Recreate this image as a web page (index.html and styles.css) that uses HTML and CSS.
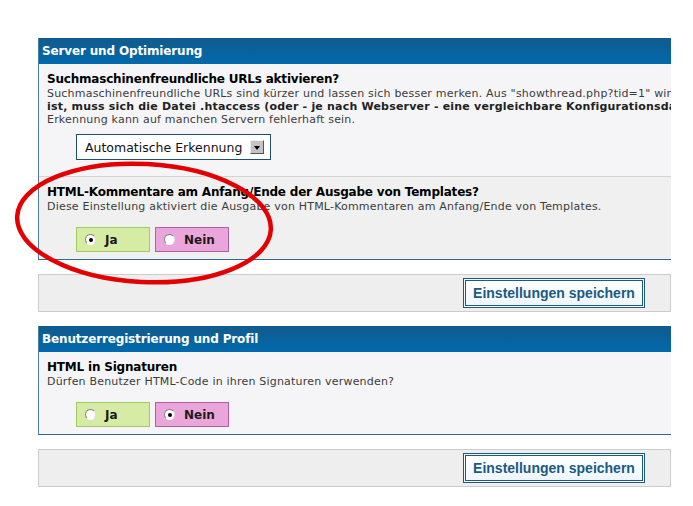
FILE: index.html
```html
<!DOCTYPE html>
<html lang="de">
<head>
    <meta charset="UTF-8">
    <title>Einstellungen</title>
    <link rel="stylesheet" href="styles.css">
</head>
<body>
    <div class="page">

        <!-- Server und Optimierung -->
        <div class="panel">
            <div class="panel-head">Server und Optimierung</div>

            <div class="row alt1 first-row">
                <div class="row-title">Suchmaschinenfreundliche URLs aktivieren?</div>
                <div class="row-desc">
                    Suchmaschinenfreundliche URLs sind kürzer und lassen sich besser merken. Aus "showthread.php?tid=1" wird "thread-1.html". Damit dies funktioniert<br>
                    <b>ist, muss sich die Datei .htaccess (oder - je nach Webserver - eine vergleichbare Konfigurationsdatei) im Hauptverzeichnis befinden.</b> Die automatische<br>
                    Erkennung kann auf manchen Servern fehlerhaft sein.
                </div>
                <div class="fake-select">
                    <span>Automatische Erkennung</span>
                    <span class="arrow"></span>
                </div>
            </div>

            <div class="row alt2">
                <div class="row-title">HTML-Kommentare am Anfang/Ende der Ausgabe von Templates?</div>
                <div class="row-desc">Diese Einstellung aktiviert die Ausgabe von HTML-Kommentaren am Anfang/Ende von Templates.</div>
                <div class="choices">
                    <label class="choice yes"><span class="radio checked"></span>Ja</label>
                    <label class="choice no"><span class="radio"></span>Nein</label>
                </div>
            </div>
        </div>

        <div class="savebar">
            <button class="save">Einstellungen speichern</button>
        </div>

        <!-- Benutzerregistrierung und Profil -->
        <div class="panel">
            <div class="panel-head">Benutzerregistrierung und Profil</div>

            <div class="row alt1">
                <div class="row-title">HTML in Signaturen</div>
                <div class="row-desc">Dürfen Benutzer HTML-Code in ihren Signaturen verwenden?</div>
                <div class="choices">
                    <label class="choice yes"><span class="radio"></span>Ja</label>
                    <label class="choice no"><span class="radio checked"></span>Nein</label>
                </div>
            </div>
        </div>

        <div class="savebar">
            <button class="save">Einstellungen speichern</button>
        </div>
    </div>

    <!-- red marker drawn over the screenshot -->
    <svg class="marker" width="300" height="150" viewBox="0 0 300 150">
        <ellipse cx="144" cy="72" rx="127" ry="59" transform="rotate(3 144 72)"
                 fill="none" stroke="#e30000" stroke-width="4.5"/>
    </svg>
</body>
</html>
```

FILE: styles.css
```css
/* General Styles */
body {
    margin: 0;
    padding: 0;
    background-color: #ffffff;
    font-family: "DejaVu Sans", Verdana, sans-serif;
    position: relative;
    overflow: hidden;
}
.page {
    padding: 38px 0 0 38px;
}
.panel {
    width: 633px;
    border-left: 1px solid #4d7c9c;
    border-bottom: 1px solid #33698f;
    overflow: hidden;
    box-sizing: border-box;
}
.panel-head {
    height: 26px;
    line-height: 26px;
    padding-left: 4px;
    margin-left: -1px;
    background: linear-gradient(#115b8c, #006aad);
    color: white;
    font-size: 12px;
    font-weight: bold;
    letter-spacing: -0.15px;
}
.row {
    padding: 8px 8px 7px 8px;
    white-space: nowrap;
}
.alt1 {
    background-color: #f5f5f7;
}
.alt2 {
    background-color: #f0f0f0;
}
.first-row {
    padding-bottom: 16px;
    border-bottom: 1px solid #d4d4d4;
}
.row-title {
    font-size: 12px;
    font-weight: bold;
    color: #000;
    line-height: 15px;
    letter-spacing: -0.2px;
}
.row-desc {
    font-size: 11px;
    line-height: 13px;
    color: #3c3c3c;
    letter-spacing: 0.2px;
}
.row-desc b {
    color: #222;
}
.fake-select {
    display: inline-flex;
    align-items: center;
    margin: 8px 0 0 29px;
    height: 24px;
    width: 193px;
    border: 1px solid #1f4d6b;
    background: white;
    box-sizing: content-box;
    font-size: 12.5px;
    color: #111;
    letter-spacing: 0;
}
.fake-select span {
    padding-left: 8px;
}
.fake-select .arrow {
    margin-left: auto;
    margin-right: 6px;
    width: 14px;
    height: 14px;
    padding: 0;
    box-sizing: border-box;
    border: 1px solid;
    border-color: #f0f0f0 #555 #555 #f0f0f0;
    background: #c4c4c4;
    position: relative;
}
.fake-select .arrow::after {
    content: "";
    position: absolute;
    left: 2.5px;
    top: 4.5px;
    border-left: 3.5px solid transparent;
    border-right: 3.5px solid transparent;
    border-top: 4px solid #000;
}
.choices {
    display: flex;
    gap: 5px;
    margin: 14px 0 0 29px;
}
.choice {
    display: flex;
    align-items: center;
    width: 74px;
    height: 25px;
    box-sizing: border-box;
    padding-left: 8px;
    font-size: 12px;
    font-weight: bold;
    color: #1a1a1a;
}
.choice.yes {
    background-color: #d6eba4;
    border: 1px solid #9fcb63;
}
.choice.no {
    background-color: #eaa6db;
    border: 1px solid #b25f9d;
}
.radio {
    width: 11px;
    height: 11px;
    border-radius: 50%;
    box-sizing: border-box;
    border: 1px solid;
    border-color: #777 #ddd #fff #888;
    background: white;
    margin-right: 9px;
    position: relative;
}
.radio.checked::after {
    content: "";
    position: absolute;
    left: 2.5px;
    top: 2.5px;
    width: 4px;
    height: 4px;
    border-radius: 50%;
    background: #000;
}
.savebar {
    width: 633px;
    height: 38px;
    box-sizing: border-box;
    margin: 14px 0 14px 0;
    background-color: #eeeeee;
    border: 1px solid #cccccc;
    display: flex;
    justify-content: flex-end;
    align-items: center;
    padding-right: 25px;
}
.save {
    width: 182px;
    height: 30px;
    border: 3px double #1d5a7f;
    background: linear-gradient(#ffffff, #eef6fb);
    color: #1b5a80;
    font-family: "Liberation Sans", Arial, sans-serif;
    font-size: 14px;
    font-weight: bold;
    padding: 0;
    cursor: pointer;
}
.marker {
    position: absolute;
    left: 0;
    top: 151px;
    pointer-events: none;
}
```
